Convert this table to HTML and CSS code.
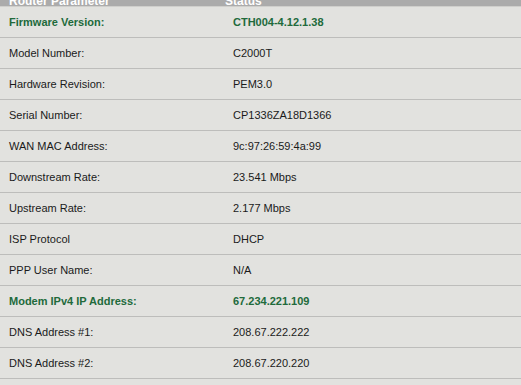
FILE: index.html
```html
<!DOCTYPE html>
<html>
<head>
<meta charset="utf-8">
<link rel="stylesheet" href="styles.css">
</head>
<body>
<div class="panel">
  <div class="head">
    <div class="hcell label">Router Parameter</div>
    <div class="hcell status">Status</div>
  </div>
  <div class="row hl"><div class="label">Firmware Version:</div><div>CTH004-4.12.1.38</div></div>
  <div class="row"><div class="label">Model Number:</div><div>C2000T</div></div>
  <div class="row"><div class="label">Hardware Revision:</div><div>PEM3.0</div></div>
  <div class="row"><div class="label">Serial Number:</div><div>CP1336ZA18D1366</div></div>
  <div class="row"><div class="label">WAN MAC Address:</div><div>9c:97:26:59:4a:99</div></div>
  <div class="row"><div class="label">Downstream Rate:</div><div>23.541 Mbps</div></div>
  <div class="row"><div class="label">Upstream Rate:</div><div>2.177 Mbps</div></div>
  <div class="row"><div class="label">ISP Protocol</div><div>DHCP</div></div>
  <div class="row"><div class="label">PPP User Name:</div><div>N/A</div></div>
  <div class="row hl"><div class="label">Modem IPv4 IP Address:</div><div>67.234.221.109</div></div>
  <div class="row"><div class="label">DNS Address #1:</div><div>208.67.222.222</div></div>
  <div class="row"><div class="label">DNS Address #2:</div><div>208.67.220.220</div></div>
</div>
</body>
</html>
```
FILE: styles.css
```css
html, body {
  margin: 0;
  padding: 0;
  background: #e2e2df;
}
.panel {
  font-family: "Liberation Sans", Arial, sans-serif;
  font-size: 11px;
  color: #1a1a1a;
}
.head {
  display: flex;
  height: 6px;
  overflow: hidden;
  background: #ababab;
  border-bottom: 1px solid #cfcfcc;
  align-items: flex-end;
}
.hcell {
  color: #fff;
  font-weight: bold;
  font-size: 12px;
  line-height: 12px;
  margin-bottom: -1px;
}
.head .label {
  width: 216px;
  padding-left: 9px;
}
.head .status {
  padding-left: 0;
}
.row {
  display: flex;
  align-items: center;
  height: 30px;
  border-bottom: 1px solid #bdbdbb;
}
.row .label {
  width: 224px;
  padding-left: 9px;
}
.row.hl {
  color: #216a3b;
  font-weight: bold;
}
```
